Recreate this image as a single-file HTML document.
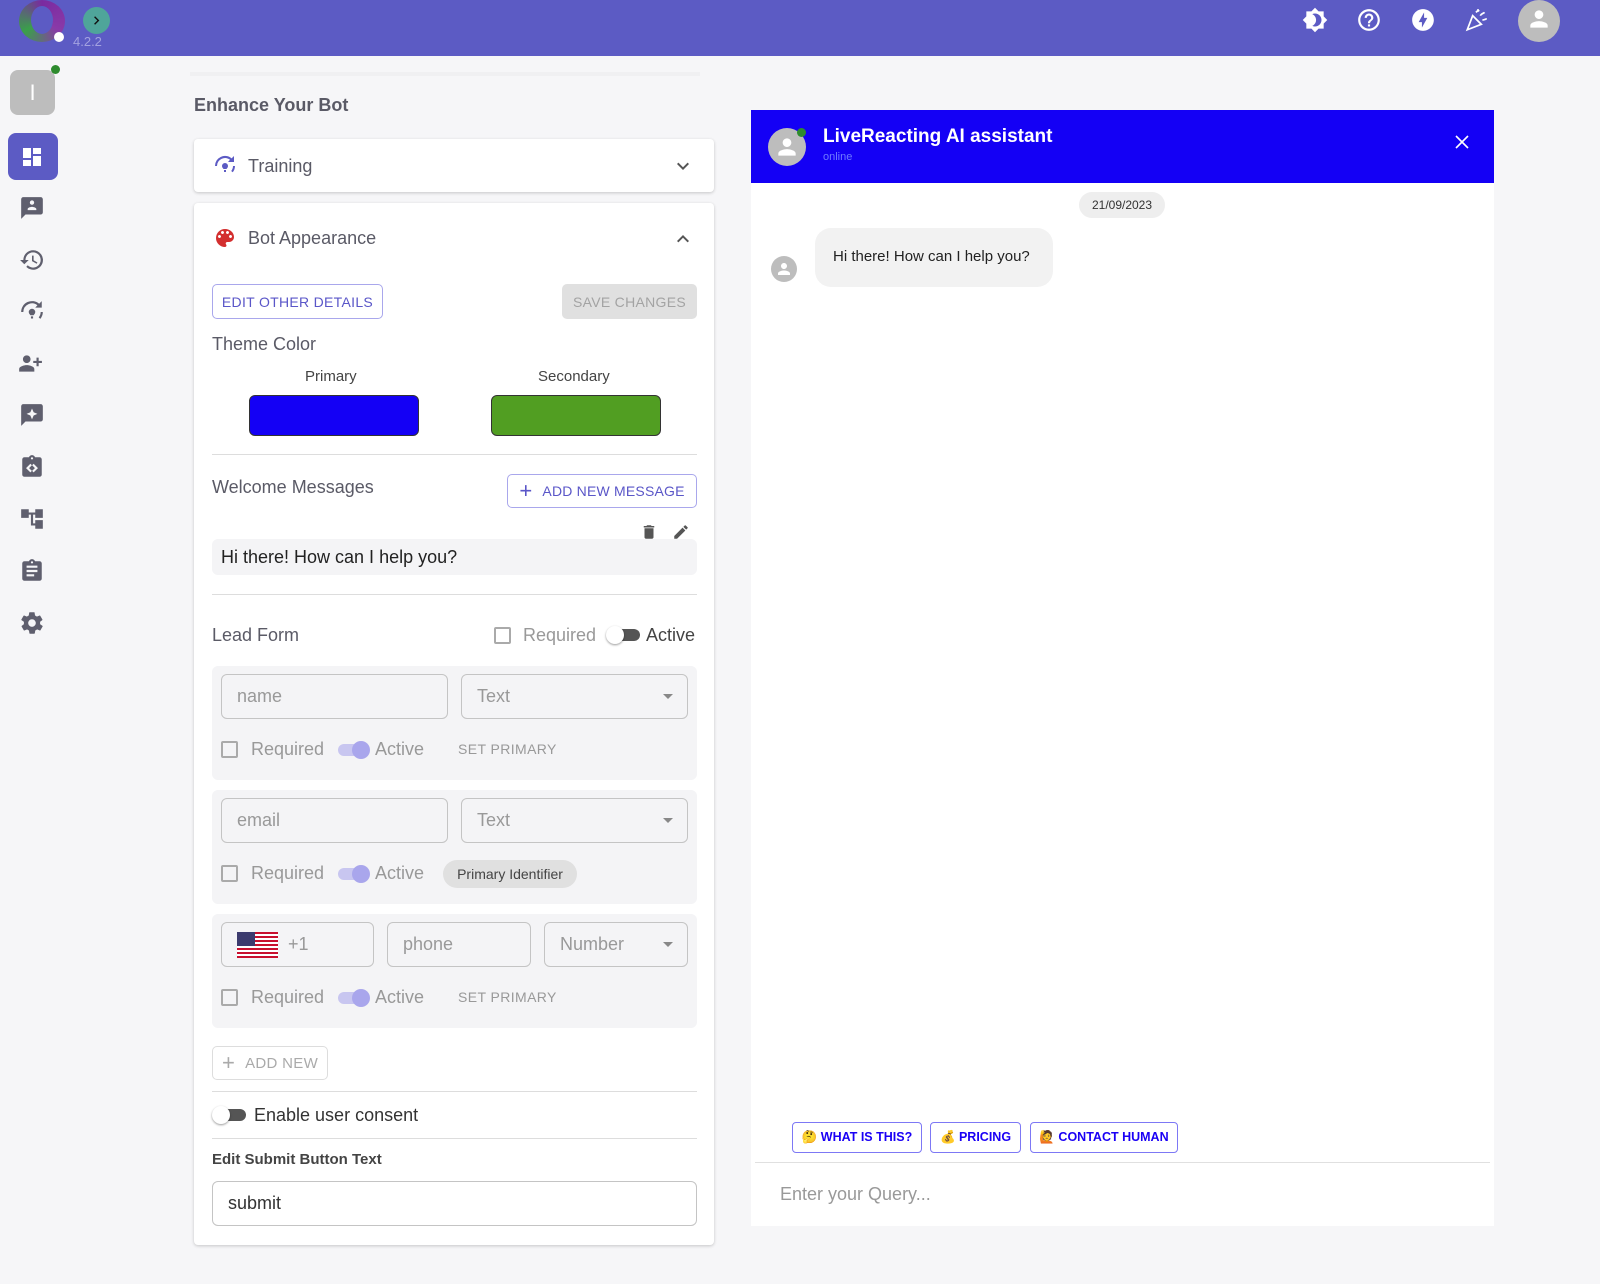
<!DOCTYPE html><html><head><style>
*{box-sizing:border-box;margin:0;padding:0}
body{width:1600px;height:1284px;background:#f6f6f8;font-family:"Liberation Sans",sans-serif;position:relative;overflow:hidden;color:#555}
.a{position:absolute}
.top{left:0;top:0;width:1600px;height:56px;background:#5c5bc4}
.ic{width:26px;height:26px;fill:#5f5f6e}
.card{background:#fff;border-radius:4px;box-shadow:0 1px 3px rgba(0,0,0,.2)}
.t{color:#5a5a66}
.btn{border:1px solid #a9a7ec;border-radius:5px;color:#5a56c8;font-size:14px;letter-spacing:.3px;display:flex;align-items:center;justify-content:center}
.inp{border:1px solid #c4c4c4;border-radius:6px;color:#999;font-size:18px;padding-left:15px;display:flex;align-items:center}
.cb{width:17px;height:17px;border:2px solid #aaa;border-radius:2px}
.sw{width:30px;height:12px;border-radius:6px;background:#c8c6f0}
.knob{width:18px;height:18px;border-radius:50%;background:#a9a6ec;top:-3px;left:14px}
.row{background:#f4f4f6;border-radius:6px}
.qb{border:1px solid #7d78f5;border-radius:4px;color:#1a00f5;font-size:12.5px;font-weight:bold;display:flex;align-items:center;justify-content:center;height:31px;top:1122px}
.dd{position:absolute;right:14px;top:19px;width:0;height:0;border-left:5px solid transparent;border-right:5px solid transparent;border-top:5px solid #888}
</style></head><body>
<div class="a top"></div>
<div class="a" style="left:19px;top:0;width:46px;height:42px;border-radius:50%;background:conic-gradient(#7a2aa0,#8a3aa8,#3aa04a,#7a2aa0)"></div>
<div class="a" style="left:31px;top:6px;width:22px;height:28px;border-radius:50%;background:#5c5bc4"></div>
<div class="a" style="left:54px;top:32px;width:10px;height:10px;border-radius:50%;background:#fff"></div>
<div class="a" style="left:83px;top:7px;width:27px;height:27px;border-radius:50%;background:#4fa59a"></div>
<svg class="a" style="left:88px;top:12px" width="17" height="17" viewBox="0 0 24 24" fill="#111"><path d="M8.6 16.6 13.2 12 8.6 7.4 10 6l6 6-6 6z"/></svg>
<div class="a" style="left:73px;top:34px;font-size:13px;color:#a3a2e0">4.2.2</div>
<svg class="a" style="left:1302px;top:7px" width="26" height="26" viewBox="0 0 24 24" fill="#fff"><path d="M20 8.69V4h-4.69L12 .69 8.69 4H4v4.69L.69 12 4 15.31V20h4.69L12 23.31 15.31 20H20v-4.69L23.31 12 20 8.69zM12 18c-.89 0-1.74-.2-2.5-.55C11.56 16.5 13 14.42 13 12s-1.44-4.5-3.5-5.45C10.26 6.2 11.11 6 12 6c3.31 0 6 2.69 6 6s-2.69 6-6 6z"/></svg>
<svg class="a" style="left:1356px;top:7px" width="26" height="26" viewBox="0 0 24 24" fill="#fff"><path d="M11 18h2v-2h-2v2zm1-16C6.48 2 2 6.48 2 12s4.48 10 10 10 10-4.48 10-10S17.52 2 12 2zm0 18c-4.41 0-8-3.59-8-8s3.59-8 8-8 8 3.59 8 8-3.59 8-8 8zm0-14c-2.21 0-4 1.79-4 4h2c0-1.1.9-2 2-2s2 .9 2 2c0 2-3 1.75-3 5h2c0-2.25 3-2.5 3-5 0-2.21-1.79-4-4-4z"/></svg>
<svg class="a" style="left:1410px;top:7px" width="26" height="26" viewBox="0 0 24 24" fill="#fff"><path d="M12 2C6.48 2 2 6.48 2 12s4.48 10 10 10 10-4.48 10-10S17.52 2 12 2zm-1 17v-5H8l5-9v5h3l-5 9z"/></svg>
<svg class="a" style="left:1464px;top:7px" width="26" height="26" viewBox="0 0 24 24" fill="none" stroke="#fff" stroke-width="1.6"><path d="M3 21l5-13 8 8z M11 5c1-1 2-1 2-3 M15 8c1-2 3-2 4-3 M17 12c2 0 3-1 4-1 M13 3l1 1"/></svg>
<div class="a" style="left:1518px;top:0;width:42px;height:42px;border-radius:50%;background:#bdbdbd"></div>
<svg class="a" style="left:1526px;top:6px" width="26" height="26" viewBox="0 0 24 24" fill="#fff"><path d="M12 12c2.2 0 4-1.8 4-4s-1.8-4-4-4-4 1.8-4 4 1.8 4 4 4zm0 2c-2.7 0-8 1.3-8 4v2h16v-2c0-2.7-5.3-4-8-4z"/></svg>
<!-- sidebar -->
<div class="a" style="left:10px;top:70px;width:45px;height:45px;border-radius:8px;background:#bdbdbd;color:#fff;text-align:center;line-height:45px;font-size:22px">I</div>
<div class="a" style="left:51px;top:65px;width:9px;height:9px;border-radius:50%;background:#2e8b2e"></div>
<div class="a" style="left:8px;top:133px;width:50px;height:47px;border-radius:8px;background:#5c5bc4"></div>
<svg class="a" style="left:20px;top:145px" width="24" height="24" viewBox="0 0 24 24" fill="#fff"><path d="M3 13h8V3H3v10zm0 8h8v-6H3v6zm10 0h8V11h-8v10zm0-18v6h8V3h-8z"/></svg>
<svg class="a ic" style="left:19px;top:195px" viewBox="0 0 24 24"><path d="M20 2H4c-1.1 0-2 .9-2 2v18l4-4h14c1.1 0 2-.9 2-2V4c0-1.1-.9-2-2-2zm-8 3c1.1 0 2 .9 2 2s-.9 2-2 2-2-.9-2-2 .9-2 2-2zm4 9H8v-1c0-1.3 2.7-2 4-2s4 .7 4 2v1z"/></svg>
<svg class="a ic" style="left:19px;top:247px" viewBox="0 0 24 24"><path d="M13 3a9 9 0 0 0-9 9H1l3.9 3.9L9 12H6c0-3.9 3.1-7 7-7s7 3.1 7 7-3.1 7-7 7c-1.9 0-3.7-.8-4.9-2.1l-1.4 1.4A9 9 0 1 0 13 3zm-1 5v5l4.3 2.5.7-1.2-3.5-2.1V8z"/></svg>
<svg class="a ic" style="left:19px;top:299px" viewBox="0 0 24 24"><path d="M12 9a3 3 0 0 0-3 3c0 1.5 1 2 1.5 3h3c.5-1 1.5-1.5 1.5-3a3 3 0 0 0-3-3zm-1 7h2v2h-2zM4 12a8 8 0 0 1 13-6.2L15 8h6V2l-2.4 2.4A10 10 0 0 0 2 12zm16 0a8 8 0 0 1-1.8 5l1.5 1.3A10 10 0 0 0 22 12z"/></svg>
<svg class="a ic" style="left:17px;top:350px" width="30" viewBox="0 0 24 24"><path d="M9 12c2 0 3.5-1.6 3.5-3.5S11 5 9 5 5.5 6.6 5.5 8.5 7 12 9 12zm0 2c-2.3 0-7 1.2-7 3.5V20h14v-2.5C16 15.2 11.3 14 9 14zm11-4V7h-2v3h-3v2h3v3h2v-3h3v-2z"/></svg>
<svg class="a ic" style="left:19px;top:402px" viewBox="0 0 24 24"><path d="M20 2H4c-1.1 0-2 .9-2 2v18l4-4h14c1.1 0 2-.9 2-2V4c0-1.1-.9-2-2-2zm-6.5 10.5L12 16l-1.5-3.5L7 11l3.5-1.5L12 6l1.5 3.5L17 11z"/></svg>
<svg class="a ic" style="left:19px;top:454px" viewBox="0 0 24 24"><path d="M19 3h-4.2C14.4 1.8 13.3 1 12 1s-2.4.8-2.8 2H5c-1.1 0-2 .9-2 2v14c0 1.1.9 2 2 2h14c1.1 0 2-.9 2-2V5c0-1.1-.9-2-2-2zm-7 0c.6 0 1 .4 1 1s-.4 1-1 1-1-.4-1-1 .4-1 1-1zm-1.5 14l-4-4 4-4 1.4 1.4L9.3 13l2.6 2.6zm3 0l-1.4-1.4 2.6-2.6-2.6-2.6L13.5 9l4 4z"/></svg>
<svg class="a ic" style="left:19px;top:506px" viewBox="0 0 24 24"><path d="M22 11V3h-7v3H9V3H2v8h7V8h2v10h4v3h7v-8h-7v3h-2V8h2v3z"/></svg>
<svg class="a ic" style="left:19px;top:558px" viewBox="0 0 24 24"><path d="M19 3h-4.2C14.4 1.8 13.3 1 12 1s-2.4.8-2.8 2H5c-1.1 0-2 .9-2 2v14c0 1.1.9 2 2 2h14c1.1 0 2-.9 2-2V5c0-1.1-.9-2-2-2zm-7 0c.6 0 1 .4 1 1s-.4 1-1 1-1-.4-1-1 .4-1 1-1zm2 14H7v-2h7v2zm3-4H7v-2h10v2zm0-4H7V7h10v2z"/></svg>
<svg class="a ic" style="left:19px;top:610px" viewBox="0 0 24 24"><path d="M19.4 13c.1-.3.1-.7.1-1s0-.7-.1-1l2.1-1.6c.2-.2.2-.4.1-.6l-2-3.5c-.1-.2-.4-.3-.6-.2l-2.5 1c-.5-.4-1.1-.7-1.7-1l-.4-2.6c0-.2-.2-.4-.5-.4h-4c-.2 0-.4.2-.5.4l-.4 2.6c-.6.3-1.2.6-1.7 1l-2.5-1c-.2-.1-.5 0-.6.2l-2 3.5c-.1.2-.1.5.1.6L4.6 11c0 .3-.1.7-.1 1s0 .7.1 1l-2.1 1.6c-.2.2-.2.4-.1.6l2 3.5c.1.2.4.3.6.2l2.5-1c.5.4 1.1.7 1.7 1l.4 2.6c0 .2.2.4.5.4h4c.2 0 .4-.2.5-.4l.4-2.6c.6-.3 1.2-.6 1.7-1l2.5 1c.2.1.5 0 .6-.2l2-3.5c.1-.2.1-.5-.1-.6L19.4 13zM12 15.5c-1.9 0-3.5-1.6-3.5-3.5s1.6-3.5 3.5-3.5 3.5 1.6 3.5 3.5-1.6 3.5-3.5 3.5z"/></svg>
<!-- left content -->
<div class="a" style="left:190px;top:72px;width:510px;height:4px;background:#f0f0f2"></div>
<div class="a t" style="left:194px;top:95px;font-size:18px;font-weight:bold;color:#5a5a66">Enhance Your Bot</div>
<div class="a card" style="left:194px;top:139px;width:520px;height:53px"></div>
<svg class="a" style="left:213px;top:154px" width="24" height="24" viewBox="0 0 24 24" fill="#5c5bc4"><path d="M12 9a3 3 0 0 0-3 3c0 1.5 1 2 1.5 3h3c.5-1 1.5-1.5 1.5-3a3 3 0 0 0-3-3zm-1 7h2v2h-2zM4 12a8 8 0 0 1 13-6.2L15 8h6V2l-2.4 2.4A10 10 0 0 0 2 12zm16 0a8 8 0 0 1-1.8 5l1.5 1.3A10 10 0 0 0 22 12z"/></svg>
<div class="a t" style="left:248px;top:156px;font-size:18px">Training</div>
<svg class="a" style="left:671px;top:154px" width="24" height="24" viewBox="0 0 24 24" fill="#555"><path d="M7.4 8.6 12 13.2l4.6-4.6L18 10l-6 6-6-6z"/></svg>
<div class="a card" style="left:194px;top:203px;width:520px;height:1042px"></div>
<svg class="a" style="left:213px;top:226px" width="24" height="24" viewBox="0 0 24 24" fill="#d32f2f"><path d="M12 3a9 9 0 0 0 0 18c.8 0 1.5-.7 1.5-1.5 0-.4-.1-.7-.4-1-.2-.3-.4-.6-.4-1 0-.8.7-1.5 1.5-1.5H16c2.8 0 5-2.2 5-5 0-4.4-4-8-9-8zm-5.5 9c-.8 0-1.5-.7-1.5-1.5S5.7 9 6.5 9 8 9.7 8 10.5 7.3 12 6.5 12zm3-4C8.7 8 8 7.3 8 6.5S8.7 5 9.5 5s1.5.7 1.5 1.5S10.3 8 9.5 8zm5 0c-.8 0-1.5-.7-1.5-1.5S13.7 5 14.5 5s1.5.7 1.5 1.5S15.3 8 14.5 8zm3 4c-.8 0-1.5-.7-1.5-1.5S16.7 9 17.5 9s1.5.7 1.5 1.5-.7 1.5-1.5 1.5z"/></svg>
<div class="a t" style="left:248px;top:228px;font-size:18px">Bot Appearance</div>
<svg class="a" style="left:671px;top:227px" width="24" height="24" viewBox="0 0 24 24" fill="#555"><path d="M7.4 15.4 12 10.8l4.6 4.6L18 14l-6-6-6 6z"/></svg>
<div class="a btn" style="left:212px;top:284px;width:171px;height:35px">EDIT OTHER DETAILS</div>
<div class="a btn" style="left:562px;top:284px;width:135px;height:35px;background:#e0e0e0;border:none;color:#a3a3a3">SAVE CHANGES</div>
<div class="a t" style="left:212px;top:334px;font-size:18px">Theme Color</div>
<div class="a t" style="left:305px;top:368px;font-size:15px;color:#444">Primary</div>
<div class="a t" style="left:538px;top:368px;font-size:15px;color:#444">Secondary</div>
<div class="a" style="left:249px;top:395px;width:170px;height:41px;background:#1400f5;border:1px solid #333;border-radius:6px"></div>
<div class="a" style="left:491px;top:395px;width:170px;height:41px;background:#519e22;border:1px solid #333;border-radius:6px"></div>
<div class="a" style="left:212px;top:454px;width:485px;height:1px;background:#ddd"></div>
<div class="a t" style="left:212px;top:477px;font-size:18px">Welcome Messages</div>
<div class="a btn" style="left:507px;top:474px;width:190px;height:34px;font-size:14px;letter-spacing:.2px"><span style="font-size:22px;margin-right:10px;font-weight:300">+</span>ADD NEW MESSAGE</div>
<svg class="a" style="left:640px;top:523px" width="18" height="18" viewBox="0 0 24 24" fill="#555"><path d="M6 19c0 1.1.9 2 2 2h8c1.1 0 2-.9 2-2V7H6v12zM19 4h-3.5l-1-1h-5l-1 1H5v2h14V4z"/></svg>
<svg class="a" style="left:672px;top:523px" width="18" height="18" viewBox="0 0 24 24" fill="#555"><path d="M3 17.25V21h3.75L17.81 9.94l-3.75-3.75L3 17.25zM20.71 7.04a1 1 0 0 0 0-1.41l-2.34-2.34a1 1 0 0 0-1.41 0l-1.83 1.83 3.75 3.75 1.83-1.83z"/></svg>
<div class="a row" style="left:212px;top:539px;width:485px;height:36px"></div>
<div class="a" style="left:221px;top:547px;font-size:18px;color:#222">Hi there! How can I help you?</div>
<div class="a" style="left:212px;top:594px;width:485px;height:1px;background:#ddd"></div>
<div class="a t" style="left:212px;top:625px;font-size:18px">Lead Form</div>
<div class="a cb" style="left:494px;top:627px"></div>
<div class="a" style="left:523px;top:625px;font-size:18px;color:#999">Required</div>
<div class="a" style="left:610px;top:629px;width:30px;height:12px;border-radius:6px;background:#555"></div>
<div class="a" style="left:606px;top:626px;width:18px;height:18px;border-radius:50%;background:#fff;box-shadow:0 1px 2px rgba(0,0,0,.4)"></div>
<div class="a" style="left:646px;top:625px;font-size:18px;color:#444">Active</div>
<!-- field rows -->
<div class="a row" style="left:212px;top:666px;width:485px;height:114px"></div>
<div class="a inp" style="left:221px;top:674px;width:227px;height:45px">name</div>
<div class="a inp" style="left:461px;top:674px;width:227px;height:45px">Text<span class="dd"></span></div>
<div class="a cb" style="left:221px;top:741px"></div><div class="a" style="left:251px;top:739px;font-size:18px;color:#999">Required</div>
<div class="a sw" style="left:338px;top:744px"><div class="a knob"></div></div><div class="a" style="left:375px;top:739px;font-size:18px;color:#999">Active</div>
<div class="a" style="left:458px;top:741px;font-size:14px;color:#999;letter-spacing:.4px">SET PRIMARY</div>

<div class="a row" style="left:212px;top:790px;width:485px;height:114px"></div>
<div class="a inp" style="left:221px;top:798px;width:227px;height:45px">email</div>
<div class="a inp" style="left:461px;top:798px;width:227px;height:45px">Text<span class="dd"></span></div>
<div class="a cb" style="left:221px;top:865px"></div><div class="a" style="left:251px;top:863px;font-size:18px;color:#999">Required</div>
<div class="a sw" style="left:338px;top:868px"><div class="a knob"></div></div><div class="a" style="left:375px;top:863px;font-size:18px;color:#999">Active</div>
<div class="a" style="left:443px;top:860px;height:28px;width:134px;border-radius:14px;background:#e0e0e0;font-size:14px;color:#444;text-align:center;line-height:28px">Primary Identifier</div>

<div class="a row" style="left:212px;top:914px;width:485px;height:114px"></div>
<div class="a inp" style="left:221px;top:922px;width:153px;height:45px"><svg width="41" height="26" viewBox="0 0 41 26"><rect width="41" height="26" fill="#fff"/><g fill="#c8102e"><rect y="0" width="41" height="2"/><rect y="4" width="41" height="2"/><rect y="8" width="41" height="2"/><rect y="12" width="41" height="2"/><rect y="16" width="41" height="2"/><rect y="20" width="41" height="2"/><rect y="24" width="41" height="2"/></g><rect width="18" height="14" fill="#3c3b6e"/></svg><span style="margin-left:10px">+1</span></div>
<div class="a inp" style="left:387px;top:922px;width:144px;height:45px">phone</div>
<div class="a inp" style="left:544px;top:922px;width:144px;height:45px">Number<span class="dd"></span></div>
<div class="a cb" style="left:221px;top:989px"></div><div class="a" style="left:251px;top:987px;font-size:18px;color:#999">Required</div>
<div class="a sw" style="left:338px;top:992px"><div class="a knob"></div></div><div class="a" style="left:375px;top:987px;font-size:18px;color:#999">Active</div>
<div class="a" style="left:458px;top:989px;font-size:14px;color:#999;letter-spacing:.4px">SET PRIMARY</div>

<div class="a btn" style="left:212px;top:1046px;width:116px;height:34px;border-color:#ddd;color:#aaa;font-size:15px"><span style="font-size:22px;margin-right:10px;font-weight:300">+</span>ADD NEW</div>
<div class="a" style="left:212px;top:1091px;width:485px;height:1px;background:#ddd"></div>
<div class="a" style="left:216px;top:1109px;width:30px;height:12px;border-radius:6px;background:#555"></div>
<div class="a" style="left:212px;top:1106px;width:18px;height:18px;border-radius:50%;background:#fff;box-shadow:0 1px 2px rgba(0,0,0,.4)"></div>
<div class="a" style="left:254px;top:1105px;font-size:18px;color:#333">Enable user consent</div>
<div class="a" style="left:212px;top:1138px;width:485px;height:1px;background:#ddd"></div>
<div class="a" style="left:212px;top:1151px;font-size:15px;font-weight:bold;color:#444">Edit Submit Button Text</div>
<div class="a inp" style="left:212px;top:1181px;width:485px;height:45px;color:#333">submit</div>
<!-- chat -->
<div class="a" style="left:751px;top:110px;width:743px;height:1116px;background:#fff"></div>
<div class="a" style="left:751px;top:110px;width:743px;height:73px;background:#1400f5"></div>
<div class="a" style="left:768px;top:128px;width:38px;height:38px;border-radius:50%;background:#bdbdbd"></div>
<svg class="a" style="left:774px;top:134px" width="26" height="26" viewBox="0 0 24 24" fill="#fff"><path d="M12 12c2.2 0 4-1.8 4-4s-1.8-4-4-4-4 1.8-4 4 1.8 4 4 4zm0 2c-2.7 0-8 1.3-8 4v2h16v-2c0-2.7-5.3-4-8-4z"/></svg>
<div class="a" style="left:797px;top:128px;width:9px;height:9px;border-radius:50%;background:#2e8b2e"></div>
<div class="a" style="left:823px;top:126px;font-size:19px;font-weight:bold;color:#fff">LiveReacting AI assistant</div>
<div class="a" style="left:823px;top:151px;font-size:11px;color:#6f7aff">online</div>
<svg class="a" style="left:1450px;top:130px" width="24" height="24" viewBox="0 0 24 24" fill="none" stroke="#fff" stroke-width="1.6"><path d="M6 6l12 12M18 6 6 18"/></svg>
<div class="a" style="left:1079px;top:192px;width:86px;height:26px;border-radius:13px;background:#eee;font-size:12px;color:#333;text-align:center;line-height:26px">21/09/2023</div>
<div class="a" style="left:771px;top:256px;width:26px;height:26px;border-radius:50%;background:#bdbdbd"></div>
<svg class="a" style="left:775px;top:260px" width="18" height="18" viewBox="0 0 24 24" fill="#fff"><path d="M12 12c2.2 0 4-1.8 4-4s-1.8-4-4-4-4 1.8-4 4 1.8 4 4 4zm0 2c-2.7 0-8 1.3-8 4v2h16v-2c0-2.7-5.3-4-8-4z"/></svg>
<div class="a" style="left:815px;top:228px;width:238px;height:59px;border-radius:16px;background:#f2f2f2;font-size:15px;color:#222;padding:20px 0 0 18px">Hi there! How can I help you?</div>
<div class="a qb" style="left:792px;width:130px">🤔&nbsp;WHAT IS THIS?</div>
<div class="a qb" style="left:930px;width:91px">💰&nbsp;PRICING</div>
<div class="a qb" style="left:1030px;width:148px">🙋&nbsp;CONTACT HUMAN</div>
<div class="a" style="left:755px;top:1162px;width:735px;height:1px;background:#e0e0e0"></div>
<div class="a" style="left:780px;top:1184px;font-size:18px;color:#999">Enter your Query...</div>
</body></html>
